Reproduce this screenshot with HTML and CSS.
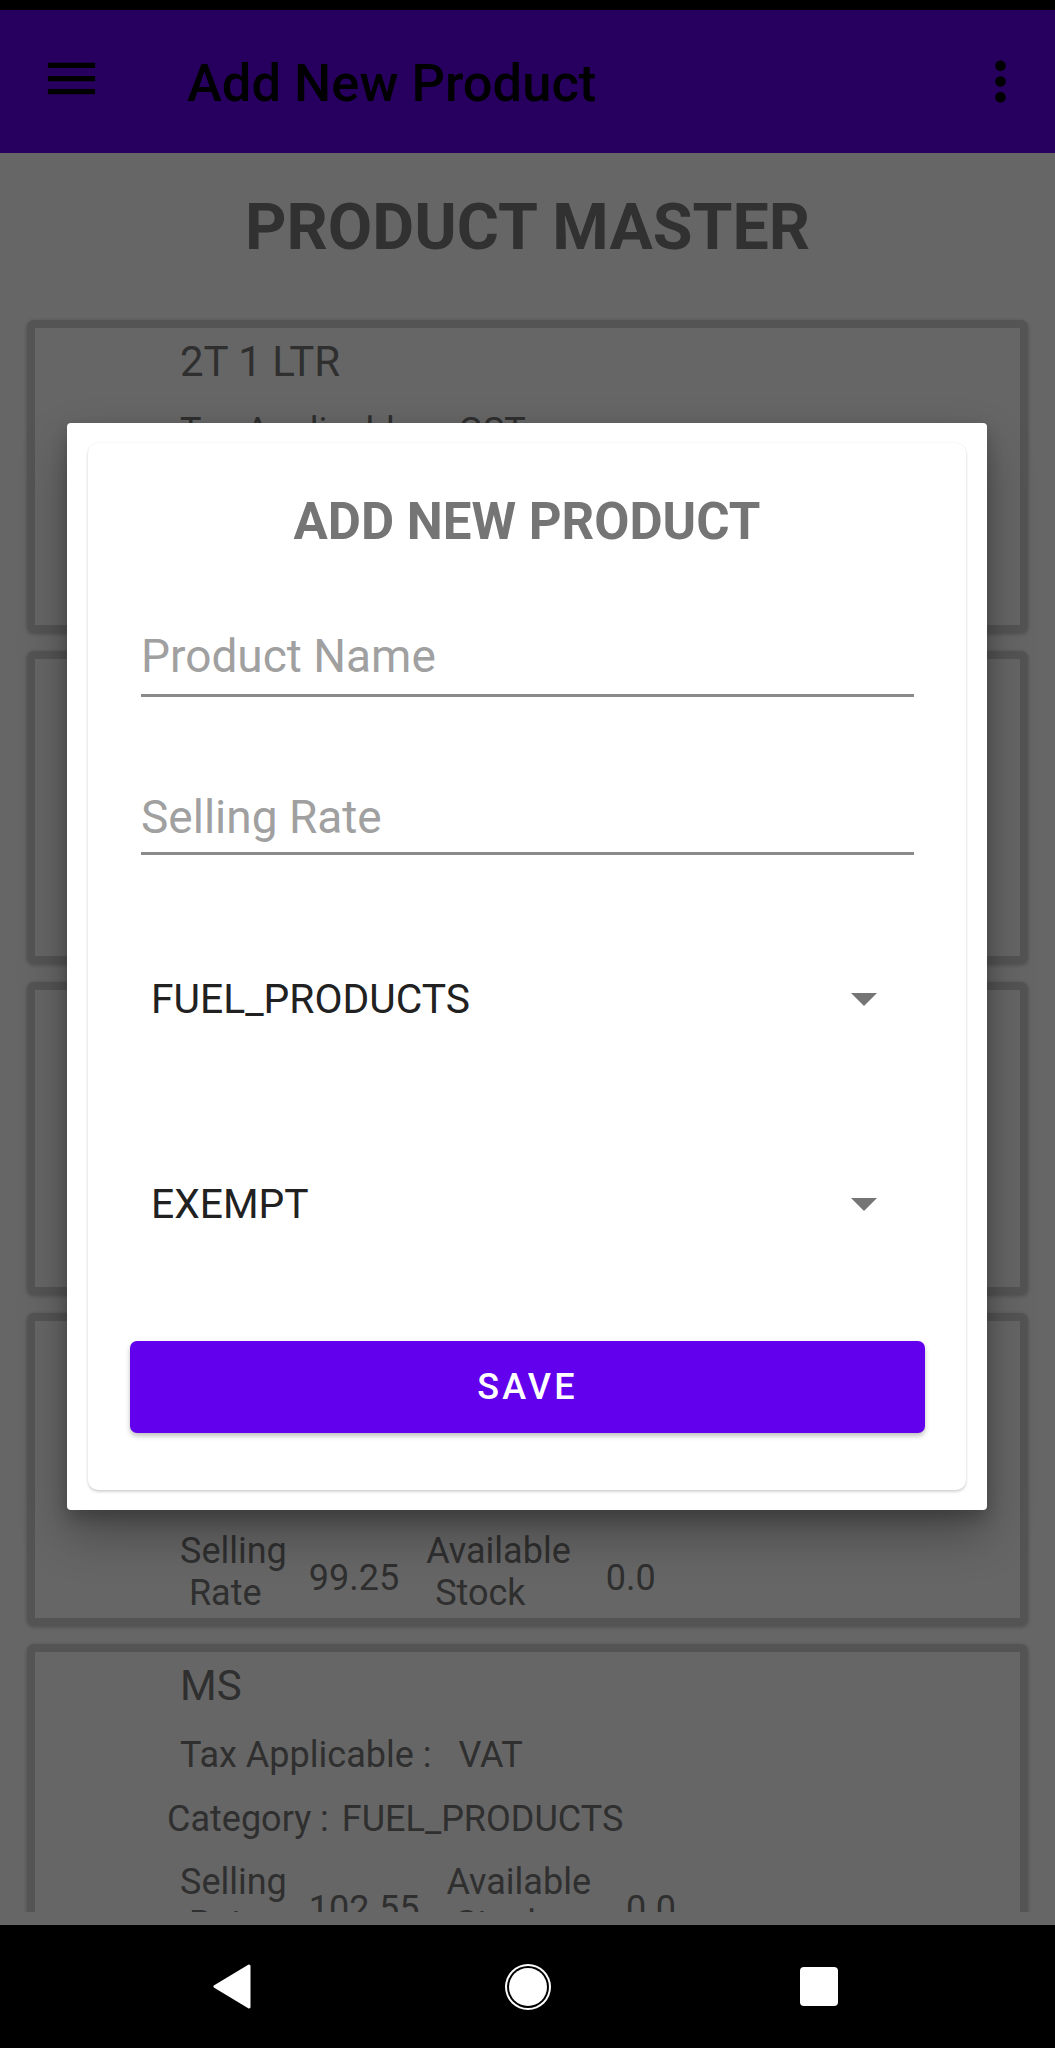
FILE: index.html
```html
<!DOCTYPE html>
<html lang="en">
<head>
<meta charset="utf-8">
<title>Add New Product</title>
<link rel="stylesheet" href="styles.css">
</head>
<body>
<div class="screen">
  <div class="statusbar"></div>
  <header class="appbar">
    <svg class="icon-menu" viewBox="0 0 24 24"><path d="M3 18h18v-2H3v2zm0-5h18v-2H3v2zm0-7v2h18V6H3z"/></svg>
    <h1 class="appbar-title">Add New Product</h1>
    <svg class="icon-more" viewBox="0 0 24 24"><path d="M12 8c1.1 0 2-.9 2-2s-.9-2-2-2-2 .9-2 2 .9 2 2 2zm0 2c-1.1 0-2 .9-2 2s.9 2 2 2 2-.9 2-2-.9-2-2-2zm0 6c-1.1 0-2 .9-2 2s.9 2 2 2 2-.9 2-2-.9-2-2-2z"/></svg>
  </header>

  <main class="content">
    <h2 class="page-title">PRODUCT MASTER</h2>
    <div class="list">
      <div class="card">
        <p class="card-name">2T 1 LTR</p>
        <p class="card-line tax"><span class="tax-label">Tax Applicable :</span><span>GST</span></p>
        <p class="card-line cat"><span class="cat-label">Category :</span><span>LUBRICANTS</span></p>
        <div class="row"><span class="two">Selling<br>&nbsp;Rate</span><span class="val v1">350.0</span><span class="two l2">Available<br>&nbsp;Stock</span><span class="val v2">0.0</span></div>
      </div>
      <div class="card">
        <p class="card-name">2T 500 ML</p>
        <p class="card-line tax"><span class="tax-label">Tax Applicable :</span><span>GST</span></p>
        <p class="card-line cat"><span class="cat-label">Category :</span><span>LUBRICANTS</span></p>
        <div class="row"><span class="two">Selling<br>&nbsp;Rate</span><span class="val v1">180.0</span><span class="two l2">Available<br>&nbsp;Stock</span><span class="val v2">0.0</span></div>
      </div>
      <div class="card">
        <p class="card-name">DISTILLED WATER</p>
        <p class="card-line tax"><span class="tax-label">Tax Applicable :</span><span>GST</span></p>
        <p class="card-line cat"><span class="cat-label">Category :</span><span>OTHERS</span></p>
        <div class="row"><span class="two">Selling<br>&nbsp;Rate</span><span class="val v1">20.0</span><span class="two l2">Available<br>&nbsp;Stock</span><span class="val v2">0.0</span></div>
      </div>
      <div class="card">
        <p class="card-name">HSD</p>
        <p class="card-line tax"><span class="tax-label">Tax Applicable :</span><span>VAT</span></p>
        <p class="card-line cat"><span class="cat-label">Category :</span><span>FUEL_PRODUCTS</span></p>
        <div class="row"><span class="two">Selling<br>&nbsp;Rate</span><span class="val v1">99.25</span><span class="two l2">Available<br>&nbsp;Stock</span><span class="val v2">0.0</span></div>
      </div>
      <div class="card">
        <p class="card-name">MS</p>
        <p class="card-line tax"><span class="tax-label">Tax Applicable :</span><span>VAT</span></p>
        <p class="card-line cat"><span class="cat-label">Category :</span><span>FUEL_PRODUCTS</span></p>
        <div class="row"><span class="two">Selling<br>&nbsp;Rate</span><span class="val v1">102.55</span><span class="two l2">Available<br>&nbsp;Stock</span><span class="val v2">0.0</span></div>
      </div>
    </div>
  </main>
  <div class="bottom-strip"></div>

  <nav class="navbar">
    <div class="nav-slot">
      <svg class="nav-back" viewBox="0 0 40 45"><polygon points="37,2 3,22.5 37,43"/></svg>
    </div>
    <div class="nav-slot">
      <svg class="nav-home" viewBox="0 0 48 48"><circle cx="24" cy="24" r="23" fill="#fff"/><circle cx="24" cy="24" r="21" fill="#000"/><circle cx="24" cy="24" r="19" fill="#fff"/></svg>
    </div>
    <div class="nav-slot">
      <div class="nav-recents"></div>
    </div>
  </nav>

  <div class="scrim"></div>

  <div class="dialog">
    <div class="form-card">
      <h3 class="form-title">ADD NEW PRODUCT</h3>
      <div class="field field-name"><span class="hint">Product Name</span></div>
      <div class="field field-rate"><span class="hint">Selling Rate</span></div>
      <div class="spinner spinner-cat">
        <span class="spinner-text">FUEL_PRODUCTS</span>
        <svg class="caret" viewBox="0 0 26 13"><polygon points="0,0 26,0 13,13"/></svg>
      </div>
      <div class="spinner spinner-tax">
        <span class="spinner-text">EXEMPT</span>
        <svg class="caret" viewBox="0 0 26 13"><polygon points="0,0 26,0 13,13"/></svg>
      </div>
      <div class="save-btn">SAVE</div>
    </div>
  </div>
</div>
</body>
</html>
```

FILE: styles.css
```css
html, body {
  margin: 0;
  padding: 0;
  background: #000;
}

.screen {
  position: relative;
  width: 1055px;
  height: 2048px;
  overflow: hidden;
  background: #fff;
  font-family: Roboto, "Liberation Sans", Arial, sans-serif;
}

.statusbar {
  height: 10px;
  background: #000;
}

.appbar {
  height: 143px;
  box-sizing: border-box;
  background: #6200ee;
  display: flex;
  align-items: center;
  padding: 0 23px 0 40px;
}

.icon-menu {
  width: 63px;
  height: 63px;
  margin-top: -6px;
  fill: #000;
  flex: none;
}

.appbar-title {
  flex: 1;
  margin: 3px 0 0 84px;
  font-size: 52.5px;
  font-weight: 500;
  line-height: normal;
  color: #000;
}

.icon-more {
  width: 63px;
  height: 63px;
  fill: #000;
  flex: none;
}

.content {
  height: 1759px;
  overflow: hidden;
}

.page-title {
  margin: 37px 0 56px;
  text-align: center;
  font-size: 64.5px;
  font-weight: 700;
  line-height: 74px;
  color: #7a7a7a;
}

.list {
  display: flex;
  flex-direction: column;
  gap: 18px;
  padding: 0 27px;
}

.card {
  flex: none;
  height: 313px;
  box-sizing: border-box;
  border: 8px solid #d3d3d3;
  border-radius: 7px;
  background: #fff;
  box-shadow: 0 1px 4px rgba(0, 0, 0, 0.25);
  padding: 9px 0 0 145px;
  color: #757575;
}

.card p {
  margin: 0;
}

.card-name {
  font-size: 42px;
  line-height: 50px;
}

.card-line {
  font-size: 36px;
  line-height: 42px;
  white-space: nowrap;
}

.tax {
  margin-top: 23px !important;
}

.tax-label {
  margin-right: 27px;
}

.cat {
  margin-top: 22px !important;
  margin-left: -13px !important;
}

.cat-label {
  margin-right: 13px;
}

.row {
  margin-top: 21px;
  display: flex;
  align-items: center;
  font-size: 36px;
  line-height: 42px;
  white-space: nowrap;
}

.two {
  display: block;
}

.val {
  padding-top: 12px;
}

.v1 {
  margin-left: 22px;
}

.l2 {
  margin-left: 27px;
}

.v2 {
  margin-left: 35px;
}

.bottom-strip {
  height: 13px;
  background: #fff;
}

.navbar {
  height: 123px;
  background: #000;
  display: flex;
  align-items: center;
  padding-left: 88px;
  position: relative;
  z-index: 3;
}

.nav-slot {
  width: 293px;
  display: flex;
  align-items: center;
  justify-content: center;
}

.nav-back {
  width: 40px;
  height: 45px;
  fill: #fff;
  stroke: #fff;
  stroke-width: 3;
  stroke-linejoin: round;
  margin-left: -5px;
}

.nav-home {
  width: 48px;
  height: 48px;
}

.nav-recents {
  width: 38px;
  height: 39px;
  background: #fff;
  border-radius: 4px;
  margin-left: -3px;
}

.scrim {
  position: absolute;
  left: 0;
  top: 10px;
  width: 1055px;
  height: 1915px;
  background: rgba(0, 0, 0, 0.6);
  z-index: 1;
}

.dialog {
  position: absolute;
  left: 67px;
  top: 423px;
  width: 920px;
  height: 1087px;
  box-sizing: border-box;
  padding: 20px 21px;
  background: #fff;
  border-radius: 4px;
  box-shadow: 0 24px 48px rgba(0, 0, 0, 0.3), 0 8px 16px rgba(0, 0, 0, 0.2);
  z-index: 2;
}

.form-card {
  height: 100%;
  box-sizing: border-box;
  border-radius: 10px;
  background: #fff;
  box-shadow: 0 2px 3px rgba(0, 0, 0, 0.16), 0 0 2px rgba(0, 0, 0, 0.08);
  padding-top: 49px;
  display: flex;
  flex-direction: column;
}

.form-title {
  margin: 0;
  text-align: center;
  font-size: 51px;
  font-weight: 700;
  line-height: 60px;
  color: #757575;
}

.field {
  margin: 0 52px 0 53px;
  padding-bottom: 11px;
  border-bottom: 3px solid #8a8a8a;
  font-size: 46px;
  line-height: 54px;
}

.field-name {
  margin-top: 77px;
}

.field-rate {
  margin-top: 93px;
  padding-bottom: 8px;
}

.hint {
  color: #a0a0a0;
}

.spinner {
  display: flex;
  align-items: center;
  justify-content: space-between;
  padding: 0 89px 0 63px;
  font-size: 40.8px;
  line-height: 47px;
  color: #212121;
}

.spinner-cat {
  margin-top: 121px;
}

.spinner-tax {
  margin-top: 158px;
}

.caret {
  width: 26px;
  height: 13px;
  fill: #757575;
}

.save-btn {
  margin: 113px 41px 0 42px;
  height: 92px;
  border-radius: 7px;
  background: #6200ee;
  box-shadow: 0 3px 5px rgba(0, 0, 0, 0.25);
  color: #fff;
  display: flex;
  align-items: center;
  justify-content: center;
  font-size: 36px;
  font-weight: 500;
  letter-spacing: 3.2px;
}
```
